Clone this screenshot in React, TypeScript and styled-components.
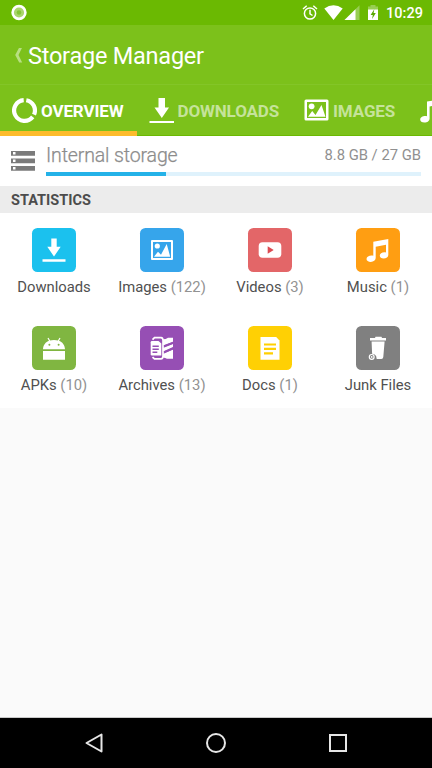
import React from "react";
import styled, { createGlobalStyle } from "styled-components";

const GlobalStyle = createGlobalStyle`
  * { box-sizing: border-box; }
  html, body { margin: 0; padding: 0; }
  body { font-family: Roboto, "Liberation Sans", sans-serif; overflow: hidden; }
  svg { display: block; flex: none; }
`;

const Screen = styled.div`
  display: flex;
  flex-direction: column;
  width: 432px;
  height: 768px;
  overflow: hidden;
  background: #fafafa;
`;

const StatusBar = styled.div`
  display: flex;
  align-items: center;
  justify-content: space-between;
  flex: none;
  height: 25px;
  padding: 0 8px 0 11px;
  background: #6bb902;
`;

const StatusIcons = styled.div`
  display: flex;
  align-items: center;
`;

const Clock = styled.span`
  width: 38px;
  margin-left: 5px;
  padding-top: 2px;
  color: #fff;
  font-size: 14.5px;
  font-weight: 500;
  line-height: 23px;
  letter-spacing: 0.05px;
  white-space: nowrap;
`;

const Header = styled.header`
  display: flex;
  align-items: center;
  flex: none;
  height: 60px;
  padding: 2px 0 0 14px;
  background: #7cc11b;
  border-bottom: 1px solid #83c528;
`;

const Title = styled.h1`
  margin: 0 0 0 5px;
  color: #fff;
  font-size: 23.5px;
  font-weight: 400;
  line-height: 30px;
  letter-spacing: -0.23px;
`;

const Tabs = styled.nav`
  display: flex;
  flex: none;
  height: 51px;
  overflow: hidden;
  background: #7cc11b;
`;

const Tab = styled.div<{ $width: number; $active?: boolean }>`
  display: flex;
  align-items: center;
  flex: none;
  width: ${(p) => p.$width}px;
  padding: ${(p) => (p.$active ? "4px 0 0 12px" : "0 0 0 12px")};
  border-bottom: ${(p) => (p.$active ? "5px solid #fdbb2c" : "1px solid #6bb902")};
  color: ${(p) => (p.$active ? "#fff" : "#c5e39a")};
`;

const TabLabel = styled.span`
  margin-left: 4px;
  font-size: 17px;
  font-weight: 700;
  line-height: 20px;
  letter-spacing: -0.13px;
  white-space: nowrap;
  padding-top: 1px;
`;

const Storage = styled.section`
  display: flex;
  align-items: center;
  flex: none;
  gap: 11px;
  height: 50px;
  padding: 0 11px 0 11px;
  background: #fff;
`;

const StorageBody = styled.div`
  flex: 1;
  height: 50px;
  padding-top: 8px;
`;

const StorageLine = styled.div`
  display: flex;
  justify-content: space-between;
  align-items: flex-start;
  height: 28px;
  color: #8c8c8c;
`;

const StorageName = styled.span`
  font-size: 19.5px;
  font-weight: 300;
  line-height: 24px;
  letter-spacing: -0.13px;
  -webkit-text-stroke: 0.25px #8c8c8c;
`;

const StorageUsage = styled.span`
  font-size: 14.8px;
  font-weight: 400;
  line-height: 22px;
  color: #909090;
`;

const Track = styled.div`
  height: 4px;
  background: #dff2fc;
`;

const Fill = styled.div`
  height: 4px;
  background: #24b2e8;
`;

const SectionTitle = styled.h2`
  flex: none;
  height: 27px;
  margin: 0;
  padding: 1px 0 0 11px;
  background: #ececec;
  color: #4c4c4c;
  font-size: 14.5px;
  font-weight: 700;
  line-height: 27px;
`;

const Grid = styled.section`
  display: grid;
  grid-template-columns: repeat(4, 108px);
  grid-template-rows: 97.5px 97.5px;
  flex: none;
  background: #fff;
`;

const Cell = styled.div`
  display: flex;
  flex-direction: column;
  align-items: center;
  padding-top: 15px;
`;

const Tile = styled.div<{ $color: string }>`
  width: 44px;
  height: 44px;
  border-radius: 5.5px;
  background: ${(p) => p.$color};
`;

const Label = styled.div`
  margin-top: 5px;
  color: #505050;
  font-size: 14.8px;
  line-height: 20px;
  white-space: nowrap;
`;

const Count = styled.span`
  color: #929292;
`;

const Spacer = styled.div`
  flex: 1;
  border-bottom: 1px solid #c8c8c8;
`;

const NavBar = styled.footer`
  display: flex;
  align-items: center;
  justify-content: space-between;
  flex: none;
  height: 50px;
  padding: 0 83px 0 82px;
  background: #000;
`;

const ImageGlyph = ({ size }: { size: number }) => (
  <svg width={size} height={size * 0.88} viewBox="0 0 25 22">
    <path
      fillRule="evenodd"
      fill="#fff"
      d="M2 .5h21Q24.500 .5 24.500 2v18q0 1.500-1.500 1.500H2Q.5 21.500 .5 20V2Q.5 .5 2 .5zM3 3v16h19V3z"
    />
    <circle cx="7.600" cy="7.300" r="2.900" fill="#fff" />
    <path fill="#fff" d="M4 17.700L8.200 12l3.300 4L17.500 6l4 11.700z" />
  </svg>
);

const NoteGlyph = () => (
  <svg width="25" height="25" viewBox="0 0 25 25">
    <path
      fill="#fff"
      d="M8 3.600L23.300 .8v17.500c0 2.100-2.100 3.900-5 3.900-2.400 0-4-1.200-4-2.900 0-2.400 3.300-4.200 6.500-3.400V6.500L10.600 8.400v12.100c0 2.400-2.300 4.100-5.200 4.100-2.600 0-4.200-1.300-4.200-3 0-2.500 3.500-4.100 6.800-3.300z"
    />
  </svg>
);

const tiles = [
  {
    name: "Downloads",
    color: "#1bc1ee",
    art: <path fill="#fff" d="M19.300 10.500h5.400v8.300h4L22 28.500l-6.700-9.700h4zM10.500 31.300h23v2.400h-23z" />,
  },
  {
    name: "Images",
    count: 122,
    color: "#36a5eb",
    art: (
      <>
        <path fillRule="evenodd" fill="#fff" d="M12 12h20q1 0 1 1v18q0 1-1 1H12q-1 0-1-1V13q0-1 1-1zM13 14v16h18V14z" />
        <circle cx="17.300" cy="18" r="2.600" fill="#fff" />
        <path fill="#fff" d="M14 28.700l4-5 3 3L26.700 16l3.500 12.700z" />
      </>
    ),
  },
  {
    name: "Videos",
    count: 3,
    color: "#e36668",
    art: (
      <>
        <rect x="10.700" y="14.300" width="22.600" height="15.400" rx="3.800" fill="#fff" />
        <path d="M19.700 18.200v7.600l6-3.800z" fill="#dc4b52" />
      </>
    ),
  },
  {
    name: "Music",
    count: 1,
    color: "#ff9e12",
    art: (
      <path
        fill="#fff"
        d="M17.300 13.700L32.300 11v16c0 2-2 3.500-4.700 3.500-2.300 0-3.800-1.200-3.800-2.800 0-2.300 3-4 6.200-3.200v-7.800l-10.300 2v11.400c0 2.300-2.200 3.800-4.900 3.800-2.500 0-4.300-1.200-4.300-2.900 0-2.400 3.500-4 6.800-3.200z"
      />
    ),
  },
  {
    name: "APKs",
    count: 10,
    color: "#80b641",
    art: (
      <>
        <path fill="#fff" d="M11 23.300c.2-4.200 2.600-7.300 6.200-8.500q4.800-1.700 9.600 0c3.600 1.200 6 4.300 6.200 8.500zM11 25h22v8.700H11z" />
        <path stroke="#fff" strokeWidth="1.200" d="M16 12l2 3.500M28 12l-2 3.500" />
        <circle cx="17.400" cy="18.700" r="1" fill="#80b641" />
        <circle cx="26.600" cy="18.700" r="1" fill="#80b641" />
      </>
    ),
  },
  {
    name: "Archives",
    count: 13,
    color: "#964fb4",
    art: (
      <>
        <path fill="none" stroke="#fff" strokeWidth="1.700" d="M12.500 13.600l2-2H21q2 .2 2 3v15.500q0 2.800-2 2.800h-6.500l-2-1.800" />
        <path fill="#fff" d="M12 15h6.500l2.800 2.600v12H12q-1.300 0-1.300-1.300v-12Q10.700 15 12 15z" />
        <path stroke="#964fb4" strokeWidth="1.400" d="M12.500 20.300h6.300M12.500 23.300h6.300M12.500 26.300h4.800" />
        <path fill="#fff" d="M23 13.300q3 0 5-1.600h5v4L23 19.500zM23 22l10-4v3L23 25.500zM23 28l10-4.500v9.200h-6q-1.500-1-4-1.200z" />
        <path stroke="#964fb4" strokeWidth="1.700" d="M24 20.300l9.500-3.700M24 26.300l9.500-3.900" />
      </>
    ),
  },
  {
    name: "Docs",
    count: 1,
    color: "#ffd004",
    art: (
      <>
        <path fill="#fff" d="M12.500 11h15.700l3.300 3.500v19.200h-19z" />
        <path stroke="#ffcf00" strokeWidth="2.200" d="M16 18.500h12M16 22.900h12M16 27.400h9" />
      </>
    ),
  },
  {
    name: "Junk Files",
    color: "#808080",
    art: (
      <>
        <path fill="#fff" d="M14 12h5l.5-1.300h6L26 12h4v2.600H14zM15.600 15.600h13L27.300 31q-.2 1.900-2 1.900h-4.600l-.6-2.800q-1-2.200-4-2.300z" />
        <circle cx="15.700" cy="30.900" r="2.400" fill="none" stroke="#fff" strokeWidth="1.200" />
        <circle cx="15.700" cy="30.900" r=".9" fill="#fff" />
      </>
    ),
  },
];

export default function App() {
  return (
    <>
      <GlobalStyle />
      <Screen>
        <StatusBar>
          <svg width="16" height="25" viewBox="0 0 16 25">
            <circle cx="8" cy="12.500" r="6.400" fill="#a9d66c" stroke="#fff" strokeWidth="2.600" />
            <circle cx="8" cy="12.500" r="2.300" fill="#84c536" />
          </svg>
          <StatusIcons>
            <svg width="79" height="25" viewBox="0 0 79 25">
              <g fill="none" stroke="#fff" strokeWidth="1.500">
                <circle cx="8" cy="13.500" r="5.600" />
                <path d="M8 9.800v4l2.500 1.700M1 9l3.700-3.200M15 9l-3.700-3.200" />
              </g>
              <path fill="#fff" d="M22.300 8.600q9.200-6.600 18.400 0L31.500 20z" />
              <path fill="#98ce53" d="M57.500 5.300v14.700h-15z" />
              <path fill="#fff" d="M53.500 9.200v10.800h-11z" />
              <path fill="#98ce53" d="M66 6.500h2.500V5h5v1.500H76v4H66z" />
              <path fill="#fff" d="M66 9.500h10V20H66z" />
              <path fill="#58a800" d="M72.300 9.200l-3.700 5.700h2.200l-.7 4 3.700-5.800h-2.200z" />
            </svg>
            <Clock>10:29</Clock>
          </StatusIcons>
        </StatusBar>
        <Header>
          <svg width="9" height="16" viewBox="0 0 9 16">
            <path d="M5.200 -.5h3L4.500 7l3.700 7.500h-3L1.200 7z" fill="#b8df82" />
          </svg>
          <Title>Storage Manager</Title>
        </Header>
        <Tabs>
          <Tab $width={136.500} $active>
            <svg width="25" height="27" viewBox="0 0 25 27">
              <g fill="none" stroke="#fff" strokeWidth="4.200">
                <path d="M14.300 3.200A10.400 10.400 0 0 1 22 17.700" />
                <path d="M11.700 3.100A10.400 10.400 0 1 0 20.700 19.900" />
              </g>
            </svg>
            <TabLabel>OVERVIEW</TabLabel>
          </Tab>
          <Tab $width={155.500}>
            <svg width="25" height="28" viewBox="0 0 25 28">
              <path fill="#fff" d="M9.500 2H16v9.500h4L12.800 22 5.500 11.500h4zM.5 25h24.500v2H.5z" />
            </svg>
            <TabLabel>DOWNLOADS</TabLabel>
          </Tab>
          <Tab $width={115}>
            <ImageGlyph size={25} />
            <TabLabel>IMAGES</TabLabel>
          </Tab>
          <Tab $width={120}>
            <NoteGlyph />
          </Tab>
        </Tabs>
        <Storage>
          <svg width="24" height="20" viewBox="0 0 24 20">
            <path fill="#7b7b7b" d="M0 0h24v4.700H0zM0 7.500h24v4.700H0zM0 15h24v4.700H0z" />
            <path fill="#fff" d="M2 1h2.500v2.500H2zM2 8.500h2.500V11H2zM2 16h2.500v2.500H2z" />
          </svg>
          <StorageBody>
            <StorageLine>
              <StorageName>Internal storage</StorageName>
              <StorageUsage>8.8 GB / 27 GB</StorageUsage>
            </StorageLine>
            <Track>
              <Fill style={{ width: "32%" }} />
            </Track>
          </StorageBody>
        </Storage>
        <SectionTitle>STATISTICS</SectionTitle>
        <Grid>
          {tiles.map((t) => (
            <Cell key={t.name}>
              <Tile $color={t.color}>
                <svg width="44" height="44" viewBox="0 0 44 44">
                  {t.art}
                </svg>
              </Tile>
              <Label>
                {t.name}
                {t.count !== undefined && <Count> ({t.count})</Count>}
              </Label>
            </Cell>
          ))}
        </Grid>
        <Spacer />
        <NavBar>
          <svg width="22" height="22" viewBox="0 0 22 22">
            <path d="M19.500 2.500v17L4.500 11z" fill="none" stroke="#e6e6e6" strokeWidth="2" strokeLinejoin="round" />
          </svg>
          <svg width="22" height="22" viewBox="0 0 22 22">
            <circle cx="11" cy="11" r="9" fill="none" stroke="#e6e6e6" strokeWidth="2" />
          </svg>
          <svg width="22" height="22" viewBox="0 0 22 22">
            <rect x="3" y="3" width="16" height="16" fill="none" stroke="#e6e6e6" strokeWidth="2" />
          </svg>
        </NavBar>
      </Screen>
    </>
  );
}
